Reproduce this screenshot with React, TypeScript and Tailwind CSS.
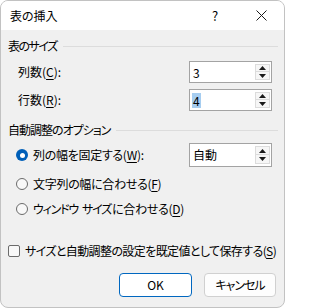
import React from "react";

function SpinButtons({ h }: { h: string }) {
  return (
    <div className="flex flex-col mr-[1px]">
      <div className={`w-[15px] ${h} flex items-center justify-center bg-[#f6f6f6] border border-[#dcdcdc]`}>
        <svg width="7" height="4" viewBox="0 0 7 4">
          <path d="M0 4 L3.5 0 L7 4 Z" fill="#1a1a1a" />
        </svg>
      </div>
      <div className={`w-[15px] ${h} flex items-center justify-center bg-[#f6f6f6] border border-t-0 border-[#dcdcdc]`}>
        <svg width="7" height="4" viewBox="0 0 7 4">
          <path d="M0 0 L3.5 4 L7 0 Z" fill="#1a1a1a" />
        </svg>
      </div>
    </div>
  );
}

function Spinner({ value, selected }: { value: string; selected?: boolean }) {
  return (
    <div className="flex items-center w-[83px] h-[22px] border border-[#a3a3a3] bg-white">
      <div className="flex-1 pl-[2px] flex items-center">
        <span className={selected ? "bg-[#a6cdf0] px-px leading-[15px]" : "px-px leading-[15px]"}>
          {value}
        </span>
      </div>
      <SpinButtons h="h-[8px]" />
    </div>
  );
}

function GroupHeader({ label, tracking }: { label: string; tracking: string }) {
  return (
    <div className="flex items-center h-[16px]">
      <span className={tracking}>{label}</span>
      <div className="flex-1 h-px bg-[#dcdcdc] ml-[6px]" />
    </div>
  );
}

function Radio({ checked, children }: { checked?: boolean; children: React.ReactNode }) {
  return (
    <div className="flex items-center pl-[8px] gap-[5px] whitespace-nowrap">
      {checked ? (
        <span className="w-[12px] h-[12px] rounded-full bg-[#005fb8] flex items-center justify-center">
          <span className="w-[5px] h-[5px] rounded-full bg-white" />
        </span>
      ) : (
        <span className="w-[12px] h-[12px] rounded-full border border-[#6b6b6b] bg-[#f8f8f8]" />
      )}
      <span className="tracking-[-0.3px]">{children}</span>
    </div>
  );
}

export default function App() {
  return (
    <div className="w-[285px] h-[308px] border border-[#c2c2c2] rounded-[8px] overflow-hidden bg-[#f0f0f0] flex flex-col text-[12px] text-black font-['Noto_Sans_CJK_JP',sans-serif] [font-feature-settings:'palt'] leading-none">
      <div className="h-[29px] bg-white flex items-center">
        <span className="pl-[9px]">表の挿入</span>
        <div className="ml-auto flex items-center">
          <span className="w-[46px] text-center text-[13px]">?</span>
          <span className="w-[46px] flex justify-center">
            <svg width="11" height="11" viewBox="0 0 11 11">
              <path d="M0.5 0.5 L10.5 10.5 M10.5 0.5 L0.5 10.5" stroke="#1a1a1a" strokeWidth="1" />
            </svg>
          </span>
        </div>
      </div>

      <div className="flex flex-col pl-[7px] pr-[6px] pt-[8px]">
        <GroupHeader label="表のサイズ" tracking="tracking-[-1.5px]" />

        <div className="flex items-center justify-between h-[22px] mt-[7px] pl-[10px] pr-[6px]">
          <span>
            列数(<span className="underline underline-offset-2">C</span>):
          </span>
          <Spinner value="3" />
        </div>
        <div className="flex items-center justify-between h-[22px] mt-[6px] pl-[10px] pr-[6px]">
          <span>
            行数(<span className="underline underline-offset-2">R</span>):
          </span>
          <Spinner value="4" selected />
        </div>

        <div className="mt-[11px]">
          <GroupHeader label="自動調整のオプション" tracking="tracking-[-1px]" />
        </div>

        <div className="flex items-center justify-between h-[24px] mt-[5px] pr-[6px]">
          <Radio checked>
            列の幅を固定する(<span className="underline underline-offset-2">W</span>):
          </Radio>
          <div className="flex items-center w-[83px] h-[24px] border border-[#a3a3a3] bg-white">
            <span className="flex-1 pl-[3px]">自動</span>
            <SpinButtons h="h-[9px]" />
          </div>
        </div>

        <div className="h-[16px] flex items-center mt-[9px]">
          <Radio>
            文字列の幅に合わせる(<span className="underline underline-offset-2">F</span>)
          </Radio>
        </div>
        <div className="h-[16px] flex items-center mt-[9px]">
          <Radio>
            <span className="tracking-[-1.2px]">ウィンドウ</span>
            <span className="inline-block w-[4px]" />
            <span className="tracking-[-1.2px]">サイズ</span>
            <span className="pl-[1px]">に合わせる(</span>
            <span className="underline underline-offset-2">D</span>)
          </Radio>
        </div>

        <div className="h-[16px] flex items-center gap-[5px] mt-[26px] whitespace-nowrap">
          <span className="w-[12px] h-[12px] rounded-[2px] border border-[#6b6b6b] bg-[#f8f8f8]" />
          <span className="tracking-[-0.6px]">
            サイズと自動調整の設定を既定値として保存する(<span className="underline underline-offset-2">S</span>)
          </span>
        </div>

        <div className="flex justify-end gap-[12px] mt-[14px] pr-[2px]">
          <button className="w-[73px] h-[24px] border border-[#0067c0] rounded-[4px] bg-white">OK</button>
          <button className="w-[72px] h-[24px] border border-[#d0d0d0] rounded-[4px] bg-[#fdfdfd] tracking-[-1px]">
            キャンセル
          </button>
        </div>
      </div>
    </div>
  );
}
